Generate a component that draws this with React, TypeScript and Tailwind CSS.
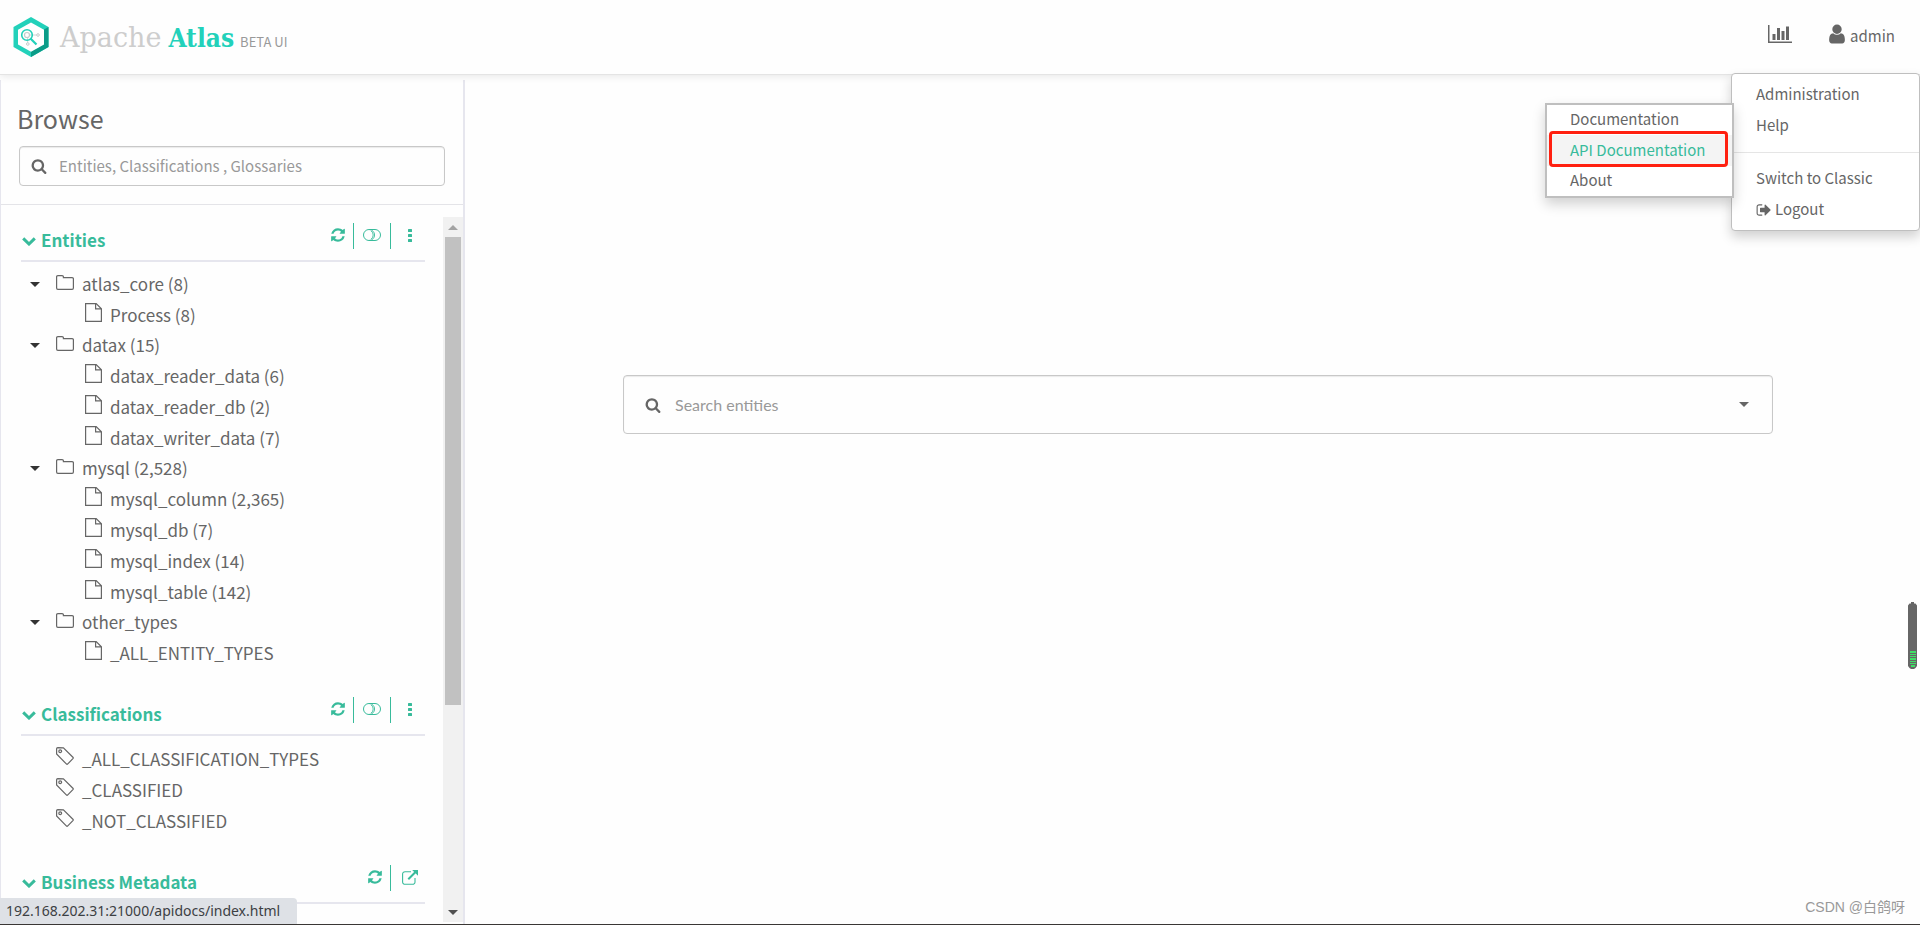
import { ReactNode } from 'react'

type IconProps = { className?: string }

const ICONS = {
    search: "M1216 832q0-185-131.5-316.5t-316.5-131.5-316.5 131.5-131.5 316.5 131.5 316.5 316.5 131.5 316.5-131.5 131.5-316.5zm512 832q0 52-38 90t-90 38q-54 0-90-38l-343-342q-179 124-399 124-143 0-273.5-55.5t-225-150-150-225-55.5-273.5 55.5-273.5 150-225 225-150 273.5-55.5 273.5 55.5 225 150 150 225 55.5 273.5q0 220-124 399l343 343q37 37 37 90z",
    refresh: "M1639 1056q0 5-1 7-64 268-268 434.5t-478 166.5q-146 0-282.5-55t-243.5-157l-129 129q-19 19-45 19t-45-19-19-45v-448q0-26 19-45t45-19h448q26 0 45 19t19 45-19 45l-137 137q71 66 161 102t187 36q134 0 250-65t186-179q11-17 53-117 8-23 30-23h192q13 0 22.5 9.5t9.5 22.5zm25-800v448q0 26-19 45t-45 19h-448q-26 0-45-19t-19-45 19-45l138-138q-148-137-349-137-134 0-250 65t-186 179q-11 17-53 117-8 23-30 23h-199q-13 0-22.5-9.5t-9.5-22.5v-7q65-268 270-434.5t480-166.5q146 0 284 55.5t245 156.5l130-129q19-19 45-19t45 19 19 45z",
    user: "M1536 1399q0 109-62.5 187t-150.5 78h-854q-88 0-150.5-78t-62.5-187q0-85 8.5-160.5t31.5-152 58.5-131 94-89 134.5-34.5q131 128 313 128t313-128q76 0 134.5 34.5t94 89 58.5 131 31.5 152 8.5 160.5zm-256-887q0 159-112.5 271.5t-271.5 112.5-271.5-112.5-112.5-271.5 112.5-271.5 271.5-112.5 271.5 112.5 112.5 271.5z",
    signOut: "M704 1440q0 4 1 20t.5 26.5-3 23.5-10 19.5-20.5 6.5h-320q-119 0-203.5-84.5t-84.5-203.5v-704q0-119 84.5-203.5t203.5-84.5h320q13 0 22.5 9.5t9.5 22.5q0 4 1 20t.5 26.5-3 23.5-10 19.5-20.5 6.5h-320q-66 0-113 47t-47 113v704q0 66 47 113t113 47h312l11.5 1 11.5 3 8 5.5 7 9 2 13.5zm928-544q0 26-19 45l-544 544q-19 19-45 19t-45-19-19-45v-288h-448q-26 0-45-19t-19-45v-384q0-26 19-45t45-19h448v-288q0-26 19-45t45-19 45 19l544 544q19 19 19 45z",
}

function Icon({ name, className }: { name: keyof typeof ICONS, className?: string }) {
    return (
        <svg viewBox="0 0 1792 1792" fill="currentColor" className={className} aria-hidden="true">
            <path d={ICONS[name]} />
        </svg>
    )
}

function ChartIcon({ className }: IconProps) {
    return (
        <svg viewBox="0 0 24 18" fill="currentColor" className={className} aria-hidden="true">
            <path d="M0 0h1.5v16.5H24V18H0zM4.5 9h3v6h-3zM9 3h3v12H9zM13.5 6h3v9h-3zM18 1.5h3V15h-3z" />
        </svg>
    )
}

function ToggleIcon() {
    return (
        <svg viewBox="0 0 18 12" fill="none" stroke="currentColor" className="w-[18px] h-3" aria-hidden="true">
            <rect x="0.5" y="0.5" width="17" height="11" rx="5.5" />
            <path d="M6.2 0.6a5.4 5.4 0 0 1 0 10.8M8.2 2a5 5 0 0 1 0 8" strokeWidth="0.9" />
        </svg>
    )
}

function DotsIcon() {
    return (
        <svg viewBox="0 0 4 13" fill="currentColor" className="w-1 h-[13px]" aria-hidden="true">
            <rect width="4" height="3" rx="0.5" />
            <rect y="5" width="4" height="3" rx="0.5" />
            <rect y="10" width="4" height="3" rx="0.5" />
        </svg>
    )
}

function ExternalIcon() {
    return (
        <svg viewBox="0 0 16 15" fill="none" stroke="currentColor" className="w-4 h-[15px]" aria-hidden="true">
            <path d="M9 1.7H3A2.4 2.4 0 0 0 .6 4.1v7.8a2.4 2.4 0 0 0 2.4 2.4h7.6a2.4 2.4 0 0 0 2.4-2.4V8" strokeWidth="1.1" />
            <path d="M6.3 9.2l7-7" strokeWidth="2" />
            <path d="M10.2 0H16v5.8z" fill="currentColor" stroke="none" />
        </svg>
    )
}

function ChevronIcon() {
    return (
        <svg viewBox="0 0 14 9" fill="none" stroke="currentColor" strokeWidth="3" className="w-[14px] h-[9px] mt-0.5" aria-hidden="true">
            <path d="M1.2 1.4L7 7l5.8-5.6" />
        </svg>
    )
}

function Caret({ className }: IconProps) {
    return (
        <svg viewBox="0 0 10 5" fill="currentColor" className={className} aria-hidden="true">
            <path d="M0 0h10L5 5z" />
        </svg>
    )
}

function FolderIcon() {
    return (
        <svg viewBox="0 0 18 15" fill="none" stroke="currentColor" strokeWidth="1.2" className="w-[18px] h-[15px] mb-1" aria-hidden="true">
            <path d="M.6 2A1.3 1.3 0 0 1 1.9.6h4.2a1.3 1.3 0 0 1 1.3 1.3v.7h8.7A1.3 1.3 0 0 1 17.4 4v9.1a1.3 1.3 0 0 1-1.3 1.3H1.9A1.3 1.3 0 0 1 .6 13.1z" />
        </svg>
    )
}

function FileIcon() {
    return (
        <svg viewBox="0 0 17 19" fill="none" stroke="currentColor" strokeWidth="1.2" className="w-[17px] h-[19px] mb-1" aria-hidden="true">
            <path d="M.6.6h10.6l5.2 5.2v12.6H.6zM10.6.6v5.3h5.8" />
        </svg>
    )
}

function TagIcon() {
    return (
        <svg viewBox="0 0 18 18" fill="none" stroke="currentColor" strokeWidth="1.2" className="w-[18px] h-[18px] mb-1.5" aria-hidden="true">
            <path d="M.6 1.8V7l9.7 9.9a1.1 1.1 0 0 0 1.5 0l5.1-5.2a1.1 1.1 0 0 0 0-1.5L7.4.8 1.8.6A1.2 1.2 0 0 0 .6 1.8z" />
            <circle cx="4.2" cy="4.2" r="1.4" />
        </svg>
    )
}

function Logo() {
    return (
        <svg viewBox="0 0 36 40" className="w-9 h-10" aria-hidden="true">
            <path d="M18 0l17.5 10v20L18 40 .5 30V10z" fill="#22d1ba" />
            <path d="M35.5 10v20L18 40v-5.5l13-7.3V12.6z" fill="#0b9c88" />
            <path d="M18 5.4l13 7.4v14.6l-13 7.4-13-7.4V12.8z" fill="#fff" />
            <g fill="none" stroke="#c4cccb">
                <circle cx="14" cy="18" r="2.5" strokeWidth="1.2" />
                <path d="M16 18h8M14.6 21v5" strokeWidth="0.8" />
                <circle cx="25" cy="18" r="1.3" fill="#fff" />
                <circle cx="14.8" cy="27" r="1.3" fill="#fff" />
            </g>
            <circle cx="14" cy="18" r="5.3" fill="none" stroke="#22d1ba" strokeWidth="1.6" />
            <path d="M17.5 21.5l6 6" stroke="#22d1ba" strokeWidth="2.2" />
        </svg>
    )
}

const entities = [
    { name: 'atlas_core (8)', children: ['Process (8)'] },
    { name: 'datax (15)', children: ['datax_reader_data (6)', 'datax_reader_db (2)', 'datax_writer_data (7)'] },
    { name: 'mysql (2,528)', children: ['mysql_column (2,365)', 'mysql_db (7)', 'mysql_index (14)', 'mysql_table (142)'] },
    { name: 'other_types', children: ['_ALL_ENTITY_TYPES'] },
]

const classifications = ['_ALL_CLASSIFICATION_TYPES', '_CLASSIFIED', '_NOT_CLASSIFIED']

function Section({ title, tools, children }: { title: string, tools: ReactNode, children?: ReactNode }) {
    return (
        <section className="mb-[23px]">
            <div className="h-[45px] flex items-start justify-between border-b-2 border-[#e6e6ee] text-[#38bb9b]">
                <h2 className="pt-[11px] pl-px">
                    <button className="flex items-center gap-[5px] text-[17px] leading-6 font-bold">
                        <ChevronIcon />
                        {title}
                    </button>
                </h2>
                <div className="flex pt-1.5">{tools}</div>
            </div>
            {children}
        </section>
    )
}

function RefreshButton() {
    return (
        <button aria-label="Refresh" className="w-8 h-[26px] pb-0.5 flex items-center justify-center border-r border-current">
            <Icon name="refresh" className="w-4 h-4" />
        </button>
    )
}

function TreeTools() {
    return (
        <>
            <RefreshButton />
            <button aria-label="Show empty types" className="w-[37px] h-[26px] pb-0.5 flex items-center justify-center border-r border-current">
                <ToggleIcon />
            </button>
            <button aria-label="More" className="w-[34px] h-[26px] pl-1 pb-0.5 flex items-center justify-center">
                <DotsIcon />
            </button>
        </>
    )
}

function Sidebar() {
    return (
        <aside className="w-[465px] shrink-0 mt-[5px] flex flex-col min-h-0 border-l border-r-2 border-l-[#e6e6ee] border-r-[#e6e6ee]">
            <div className="pt-[18px] px-[18px] pb-[18px] border-b border-[#e4e4e8]">
                <h1 className="-ml-0.5 text-[25px] leading-10">Browse</h1>
                <div className="mt-2 h-10 flex items-center gap-3 px-[11px] border border-[#c8c8c8] rounded shadow-[inset_0_1px_1px_rgba(0,0,0,0.08)]">
                    <Icon name="search" className="w-4 h-4" />
                    <input
                        aria-label="Search the tree"
                        placeholder="Entities, Classifications , Glossaries"
                        className="flex-1 min-w-0 text-[15px] outline-none bg-transparent placeholder:text-[#999]"
                    />
                </div>
            </div>
            <div className="flex-1 min-h-0 flex mt-3 mb-[3px]">
                <div className="flex-1 min-w-0 overflow-hidden pl-5 pr-[18px]">
                    <Section title="Entities" tools={<TreeTools />}>
                        <ul className="pt-[7px] text-[17px]">
                            {entities.map((group) => (
                                <li key={group.name}>
                                    <div className="h-[30px] flex items-center">
                                        <button aria-label="Collapse" className="w-[35px] pl-[9px] text-[#333]">
                                            <Caret className="w-2.5 h-[5px]" />
                                        </button>
                                        <FolderIcon />
                                        <a href="#" className="pl-2">{group.name}</a>
                                    </div>
                                    <ul>
                                        {group.children.map((child) => (
                                            <li key={child} className="h-[31px] flex items-center pl-16">
                                                <FileIcon />
                                                <a href="#" className="pl-2">{child}</a>
                                            </li>
                                        ))}
                                    </ul>
                                </li>
                            ))}
                        </ul>
                    </Section>
                    <Section title="Classifications" tools={<TreeTools />}>
                        <ul className="pt-[7px] text-[17px]">
                            {classifications.map((name) => (
                                <li key={name} className="h-[31px] flex items-center pl-[35px]">
                                    <TagIcon />
                                    <a href="#" className="pl-2">{name}</a>
                                </li>
                            ))}
                        </ul>
                    </Section>
                    <Section
                        title="Business Metadata"
                        tools={
                            <>
                                <RefreshButton />
                                <button aria-label="Open" className="w-[34px] h-[26px] pl-1 pb-0.5 flex items-center justify-center">
                                    <ExternalIcon />
                                </button>
                            </>
                        }
                    />
                </div>
                <div className="w-5 shrink-0 flex flex-col items-center bg-[#f1f1f1]">
                    <div className="h-5 flex items-center">
                        <Caret className="w-2.5 h-[5px] rotate-180 text-[#a3a3a3]" />
                    </div>
                    <div className="w-4 h-[468px] bg-[#c1c1c1]"></div>
                    <div className="h-5 mt-auto flex items-center">
                        <Caret className="w-2.5 h-[5px] text-[#505050]" />
                    </div>
                </div>
            </div>
        </aside>
    )
}

function Header() {
    return (
        <header className="relative z-10 h-[75px] shrink-0 flex items-center justify-between pl-[13px] pr-[25px] border-b border-[#e4e4e4] shadow-[0_1px_8px_rgba(0,0,0,0.1)] bg-[#fefefe]">
            <a href="#" className="flex items-center">
                <Logo />
                <span className="pl-[11px] pt-0.5 flex items-baseline">
                    <span className="font-[DejaVu_Serif,serif] text-[27px] text-[#cdcdcd]">Apache</span>
                    <span className="pl-[7px] font-[DejaVu_Serif_Condensed,DejaVu_Serif,serif] font-bold text-[26px] text-[#22d1ba]">Atlas</span>
                    <span className="pl-1.5 text-[13px] text-[#999]">BETA UI</span>
                </span>
            </a>
            <div className="flex items-center gap-[34px] pb-0.5">
                <button aria-label="Statistics" className="pb-1">
                    <ChartIcon className="w-6 h-[18px]" />
                </button>
                <button className="flex items-center gap-0.5 text-[15px]">
                    <Icon name="user" className="w-[22px] h-[22px] mb-1" />
                    admin
                </button>
            </div>
            <nav className="absolute right-0 top-[73px] w-[189px] py-[5px] flex flex-col text-[15px] bg-white border border-[#bfbfbf] rounded shadow-[0_6px_12px_rgba(0,0,0,0.18)]">
                <a href="#" className="h-[31px] flex items-center pl-6">Administration</a>
                <a href="#" className="h-[31px] flex items-center pl-6">Help</a>
                <hr className="mt-[11px] mb-2.5 border-[#e5e5e5]" />
                <a href="#" className="h-[31px] flex items-center pl-6">Switch to Classic</a>
                <a href="#" className="h-[31px] flex items-center gap-[3px] pl-6">
                    <Icon name="signOut" className="w-4 h-4" />
                    Logout
                </a>
            </nav>
            <nav className="absolute right-[186px] top-[103px] w-[189px] flex flex-col text-[15px] bg-white border-2 border-[#bfbfbf] shadow-[0_6px_12px_rgba(0,0,0,0.18)]">
                <a href="#" className="h-[30px] flex items-center pl-[23px] pb-px">Documentation</a>
                <a href="#" className="h-[31px] flex items-center pl-[23px] pb-px bg-[#f4f4f4] text-[#38bb9b]">API Documentation</a>
                <a href="#" className="h-[30px] flex items-center pl-[23px] pb-px">About</a>
                <div className="absolute left-0.5 top-[26px] w-[179px] h-9 border-3 border-[#ff2010] rounded"></div>
            </nav>
        </header>
    )
}

function Battery() {
    return (
        <svg viewBox="0 0 9 67" className="w-[9px] h-[67px]" aria-hidden="true">
            <path d="M3 0h3v1.5h1.5L9 3.5V64l-1.5 2L6 67H3l-1.5-1L0 64V3.5l1.5-2H3z" fill="#666" />
            <path d="M2 49h6v2H2zM2 52h6v1H2zM2 54h6v1H2zM2 56h6v2H2zM2 59h6v1H2zM2 61h6v1H2zM3 63h4v2H3z" fill="#3fe066" />
        </svg>
    )
}

function App() {
    return (
        <div className="relative h-screen flex flex-col bg-[#fefefe] text-[#666] font-[Noto_Sans_CJK_SC,sans-serif]">
            <Header />
            <div className="flex-1 min-h-0 flex">
                <Sidebar />
                <main className="flex-1 min-w-0 pt-[300px] pl-[158px] pr-[147px]">
                    <div className="h-[59px] flex items-center gap-[14px] pl-[21px] pr-[23px] border border-[#c8c8c8] rounded shadow-[inset_0_1px_1px_rgba(0,0,0,0.08)]">
                        <Icon name="search" className="w-4 h-4" />
                        <input
                            aria-label="Search entities"
                            placeholder="Search entities"
                            className="flex-1 min-w-0 font-[Lato,sans-serif] text-base outline-none bg-transparent placeholder:text-[#999]"
                        />
                        <button aria-label="Search options">
                            <Caret className="w-2.5 h-[5px]" />
                        </button>
                    </div>
                </main>
            </div>
            <div className="absolute right-[3px] top-[602px]">
                <Battery />
            </div>
            <div className="absolute right-[15px] bottom-2 text-sm text-[#999] font-[Liberation_Sans,Noto_Sans_CJK_SC,sans-serif]">CSDN @白鸽呀</div>
            <div className="absolute left-0 bottom-0 w-full h-px bg-[#3a3735]"></div>
            <div className="absolute left-0 bottom-px h-[26px] w-[297px] flex items-center pl-1.5 rounded-tr bg-[#dee1e6] text-sm text-[#3c4043] font-[Noto_Sans,sans-serif]">
                192.168.202.31:21000/apidocs/index.html
            </div>
        </div>
    )
}

export default App
